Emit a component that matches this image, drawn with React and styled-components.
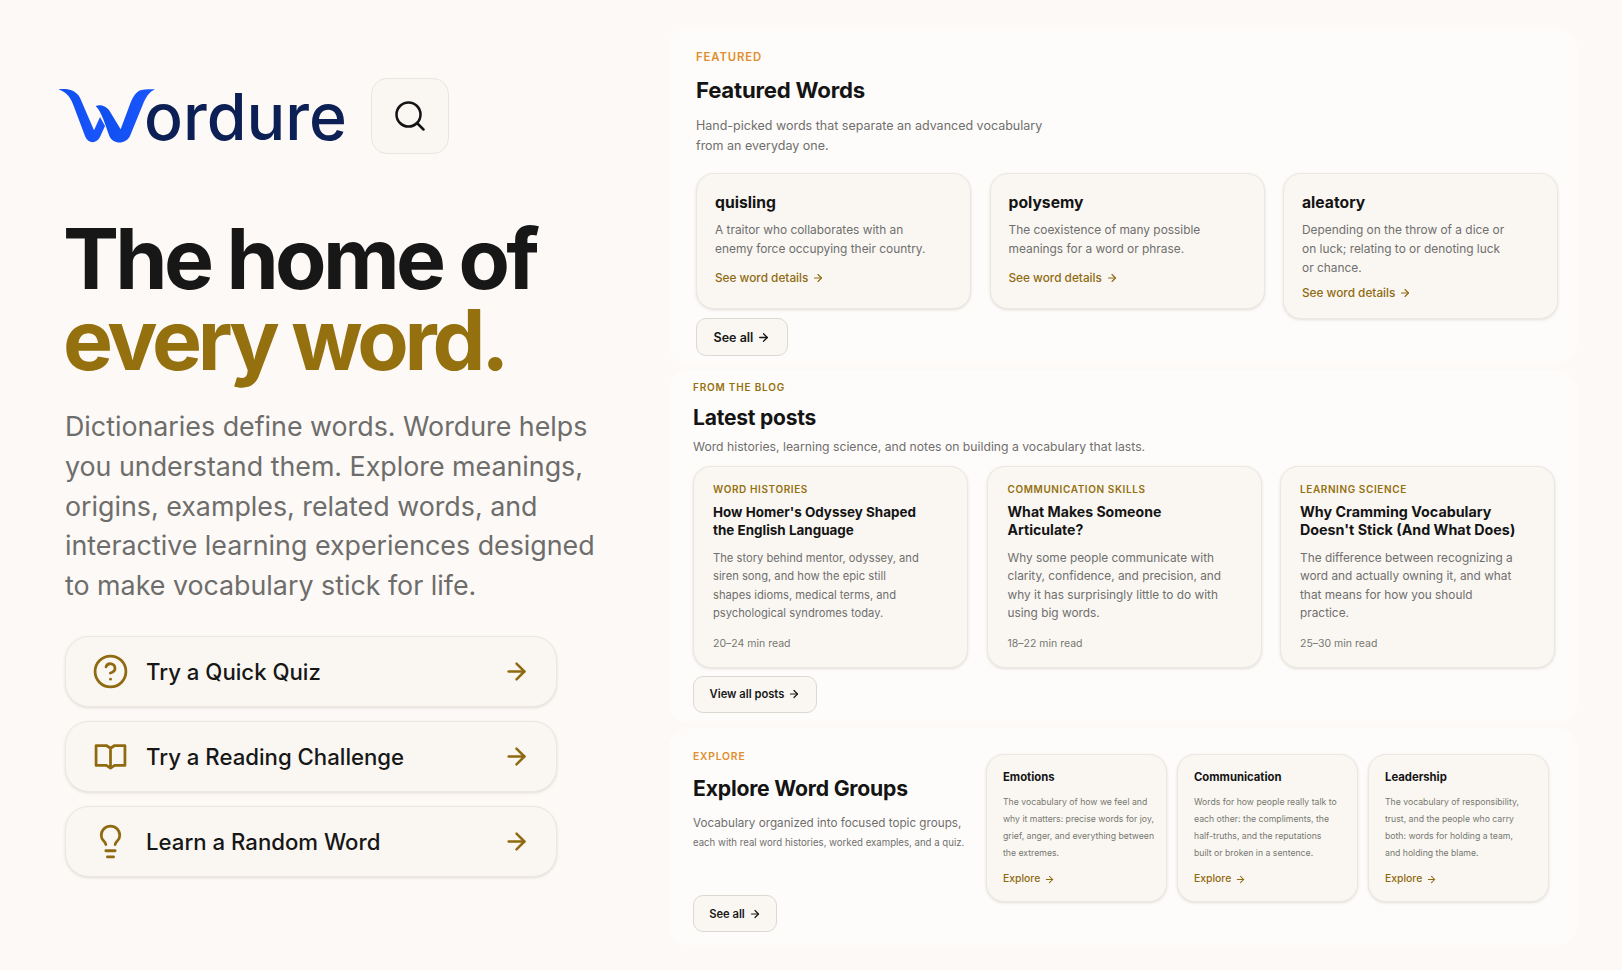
import React from 'react';
import styled, { createGlobalStyle } from 'styled-components';
import { CircleHelp, Lightbulb, ArrowRight, Search } from 'lucide-react';

const GlobalStyle = createGlobalStyle`
  html, body {
    margin: 0;
    padding: 0;
    background: #fdf9f6;
    font-family: 'Inter', 'Liberation Sans', sans-serif;
    color: #141414;
  }
  * { box-sizing: border-box; }
`;

const Page = styled.div`
  width: 1622px;
  height: 970px;
  overflow: hidden;
  display: grid;
  grid-template-columns: 669px 908px;
  background: #fdf9f6;
`;

const Hero = styled.div`
  display: flex;
  flex-direction: column;
  padding: 78px 0 0 65px;
`;

const LogoRow = styled.div`
  display: flex;
  align-items: center;
  gap: 24px;
  margin-left: -7px;
`;

const Logo = styled.div`
  display: flex;
  align-items: flex-end;
  height: 76px;
  padding-bottom: 3px;
`;

const LogoMark = styled.svg`
  width: 110px;
  height: 70px;
  margin: 0 -16px 0 -8px;
  flex: none;
`;

const LogoWord = styled.span`
  font-size: 64.5px;
  font-weight: 500;
  line-height: 64px;
  color: #0d2055;
  padding-bottom: 2px;
`;

const SearchButton = styled.button`
  width: 78px;
  height: 76px;
  display: flex;
  align-items: center;
  justify-content: center;
  background: #faf7f3;
  border: 1px solid #e9e5df;
  border-radius: 16px;
  color: #141414;
  padding: 0;
`;

const Headline = styled.h1`
  margin: 64px 0 0 -2px;
  font-size: 84px;
  line-height: 81px;
  font-weight: 700;
  letter-spacing: -0.044em;
  color: #171717;
`;

const Gold = styled.span`
  display: block;
  letter-spacing: -0.05em;
  color: #94700f;
`;

const Lead = styled.p`
  margin: 27px 0 0;
  width: 540px;
  font-size: 26.8px;
  line-height: 39.8px;
  font-weight: 400;
  color: #6d6d6b;
`;

const Actions = styled.div`
  display: flex;
  flex-direction: column;
  gap: 14px;
  margin-top: 30px;
  width: 492px;
`;

const Action = styled.a`
  height: 71px;
  display: flex;
  align-items: center;
  padding: 0 26px 0 28px;
  background: #faf7f3;
  border: 1px solid #ebe7e1;
  border-radius: 24px;
  box-shadow: 0 1px 3px rgba(60, 50, 30, 0.14);
  color: #8f6a10;
`;

const ActionIcon = styled.span`
  width: 32px;
  display: flex;
  justify-content: center;
  flex: none;

  svg {
    flex: none;
  }
`;

const ActionLabel = styled.span`
  flex: 1;
  margin-left: 20px;
  font-size: 22.2px;
  font-weight: 500;
  color: #171717;
`;

const Panels = styled.div`
  display: flex;
  flex-direction: column;
  gap: 5px;
  padding-top: 27px;
`;

const Panel = styled.section`
  height: ${(p) => p.$height}px;
  padding: ${(p) => p.$top}px 0 0 ${(p) => p.$left}px;
  background: #fefcfa;
  border-radius: 20px;
`;

const Eyebrow = styled.div`
  font-size: ${(p) => p.$size}px;
  line-height: 14px;
  font-weight: 600;
  letter-spacing: 0.08em;
  color: ${(p) => p.$color};
`;

const PanelTitle = styled.h2`
  margin: ${(p) => p.$gap}px 0 0;
  font-size: ${(p) => p.$size}px;
  line-height: 30px;
  font-weight: 650;
  letter-spacing: -0.01em;
  color: #141414;
`;

const PanelText = styled.p`
  margin: ${(p) => p.$gap}px 0 0;
  font-size: ${(p) => p.$size || 12.5}px;
  line-height: 20.5px;
  color: #6f6f6d;
`;

const CardRow = styled.div`
  display: grid;
  grid-template-columns: repeat(3, 275px);
  column-gap: 18.5px;
  align-items: start;
  margin-top: ${(p) => p.$gap}px;
`;

const Card = styled.article`
  padding: ${(p) => p.$pad};
  min-height: ${(p) => p.$min || 0}px;
  background: #faf7f3;
  border: 1px solid #ebe7e1;
  border-radius: 18px;
  box-shadow: 0 1px 3px rgba(60, 50, 30, 0.14);
`;

const WordName = styled.h3`
  margin: 0;
  font-size: 15.7px;
  line-height: 22px;
  font-weight: 650;
  color: #141414;
`;

const WordDef = styled.p`
  margin: 6px 0 0;
  font-size: 11.9px;
  line-height: 19px;
  color: #6f6f6d;
`;

const TextLink = styled.a`
  display: flex;
  align-items: center;
  gap: 4px;
  margin-top: ${(p) => p.$gap}px;
  font-size: ${(p) => p.$size}px;
  line-height: 16px;
  font-weight: 500;
  color: #8f6a10;
`;

const OutlineButton = styled.a`
  display: inline-flex;
  align-items: center;
  justify-content: center;
  gap: 4px;
  width: ${(p) => p.$width}px;
  height: ${(p) => p.$h || 37}px;
  margin-top: ${(p) => p.$gap}px;
  background: #faf7f3;
  border: 1px solid #dcd8d2;
  border-radius: 10px;
  font-size: ${(p) => p.$size}px;
  font-weight: 600;
  color: #171717;
`;

const PostTag = styled.div`
  font-size: 10px;
  line-height: 14px;
  font-weight: 600;
  letter-spacing: 0.06em;
  color: #94700f;
`;

const PostTitle = styled.h3`
  margin: 7px 0 0;
  font-size: ${(p) => p.$size}px;
  line-height: 18.8px;
  font-weight: 650;
  color: #141414;
`;

const PostBody = styled.p`
  margin: 9px 0 0;
  font-size: ${(p) => p.$size}px;
  line-height: 18.3px;
  color: #6f6f6d;
`;

const PostMeta = styled.div`
  margin-top: 14px;
  font-size: 10.5px;
  line-height: 16px;
  color: #77776f;
`;

const ExploreLayout = styled.div`
  display: flex;
  gap: 21px;
`;

const ExploreIntro = styled.div`
  width: 272px;
  height: 183px;
  display: flex;
  flex-direction: column;
  align-items: flex-start;
  flex: none;
`;

const ExploreLine = styled.span`
  display: block;
  white-space: nowrap;
  font-size: ${(p) => p.$size}px;
  line-height: 20px;
`;

const ExploreButton = styled(OutlineButton)`
  margin-top: auto;
`;

const GroupRow = styled.div`
  display: grid;
  grid-template-columns: repeat(3, 181px);
  column-gap: 10px;
  margin-top: 5px;
  height: 148px;
`;

const GroupName = styled.h3`
  margin: 0;
  font-size: 11.3px;
  line-height: 16px;
  font-weight: 650;
  color: #141414;
`;

const GroupText = styled.p`
  margin: 9px 0 0;
  font-size: 8.7px;
  line-height: 17px;
  color: #77776f;
  white-space: nowrap;
`;

const BookIcon = () => (
  <svg width="33" height="33" viewBox="0 0 24 24" fill="none" stroke="currentColor" strokeWidth="2" strokeLinejoin="round" strokeLinecap="round">
    <path d="M12 6v13.5M1.5 4h7.5l3 2 3-2h7.5v14.5h-7.5l-3 2-3-2H1.5z" />
  </svg>
);

const WMark = () => (
  <LogoMark viewBox="0 0 330 210">
    <defs>
      <linearGradient id="wGrad" x1="0" y1="0" x2="1" y2="0">
        <stop offset="0" stopColor="#0f4fec" />
        <stop offset="1" stopColor="#1a55ff" />
      </linearGradient>
    </defs>
    <path fill="url(#wGrad)" d="M25 25C50 22 75 24 90 50L132 148L150 108L165 135L150 168C140 188 115 190 105 165L70 72C60 45 45 32 25 25Z" />
    <path fill="url(#wGrad)" d="M137 75C150 70 170 72 182 95L212 145L238 75C248 48 258 30 275 27C288 25 300 25 315 25C297 33 287 50 278 72L240 165C228 190 190 192 178 165L160 115C152 95 145 82 137 75Z" />
  </LogoMark>
);

const actions = [
  { label: 'Try a Quick Quiz', icon: <CircleHelp size={37} strokeWidth={1.8} /> },
  { label: 'Try a Reading Challenge', icon: <BookIcon /> },
  { label: 'Learn a Random Word', icon: <Lightbulb size={37} strokeWidth={1.8} /> },
];

const words = [
  { name: 'quisling', def: ['A traitor who collaborates with an', 'enemy force occupying their country.'], min: 136 },
  { name: 'polysemy', def: ['The coexistence of many possible', 'meanings for a word or phrase.'], min: 136 },
  { name: 'aleatory', def: ['Depending on the throw of a dice or', 'on luck; relating to or denoting luck', 'or chance.'], min: 146 },
];

const posts = [
  {
    tag: 'WORD HISTORIES',
    title: ["How Homer's Odyssey Shaped", 'the English Language'],
    body: ['The story behind mentor, odyssey, and', 'siren song, and how the epic still', 'shapes idioms, medical terms, and', 'psychological syndromes today.'],
    meta: '20–24 min read',
    pad: '15px 19px 0',
    titleSize: 13.45,
    bodySize: 11.2,
  },
  {
    tag: 'COMMUNICATION SKILLS',
    title: ['What Makes Someone', 'Articulate?'],
    body: ['Why some people communicate with', 'clarity, confidence, and precision, and', 'why it has surprisingly little to do with', 'using big words.'],
    meta: '18–22 min read',
    pad: '15px 19px 0 20px',
    titleSize: 14.1,
    bodySize: 11.85,
  },
  {
    tag: 'LEARNING SCIENCE',
    title: ['Why Cramming Vocabulary', "Doesn't Stick (And What Does)"],
    body: ['The difference between recognizing a', 'word and actually owning it, and what', 'that means for how you should', 'practice.'],
    meta: '25–30 min read',
    pad: '15px 19px 0',
    titleSize: 14.3,
    bodySize: 11.85,
  },
];

const groups = [
  { name: 'Emotions', text: ['The vocabulary of how we feel and', 'why it matters: precise words for joy,', 'grief, anger, and everything between', 'the extremes.'] },
  { name: 'Communication', text: ['Words for how people really talk to', 'each other: the compliments, the', 'half-truths, and the reputations', 'built or broken in a sentence.'] },
  { name: 'Leadership', text: ['The vocabulary of responsibility,', 'trust, and the people who carry', 'both: words for holding a team,', 'and holding the blame.'] },
];

const Lines = ({ items }) => items.map((line) => <div key={line}>{line}</div>);

export default function App() {
  return (
    <Page>
      <GlobalStyle />
      <Hero>
        <LogoRow>
          <Logo>
            <WMark />
            <LogoWord>ordure</LogoWord>
          </Logo>
          <SearchButton aria-label="Search">
            <Search size={36} strokeWidth={1.7} />
          </SearchButton>
        </LogoRow>
        <Headline>
          The home of
          <Gold>every word.</Gold>
        </Headline>
        <Lead>
          Dictionaries define words. Wordure helps you understand them. Explore meanings, origins, examples, related words, and
          interactive learning experiences designed to make vocabulary stick for life.
        </Lead>
        <Actions>
          {actions.map((a) => (
            <Action key={a.label}>
              <ActionIcon>{a.icon}</ActionIcon>
              <ActionLabel>{a.label}</ActionLabel>
              <ArrowRight size={27} strokeWidth={2.2} />
            </Action>
          ))}
        </Actions>
      </Hero>

      <Panels>
        <Panel $height={338} $top={23} $left={27}>
          <Eyebrow $color="#e08e2e" $size={11.3}>FEATURED</Eyebrow>
          <PanelTitle $gap={11} $size={22.2}>Featured Words</PanelTitle>
          <PanelText $gap={10.5}>
            Hand-picked words that separate an advanced vocabulary
            <br />
            from an everyday one.
          </PanelText>
          <CardRow $gap={16.5}>
            {words.map((w) => (
              <Card key={w.name} $pad="18px 18px 0" $min={w.min}>
                <WordName>{w.name}</WordName>
                <WordDef><Lines items={w.def} /></WordDef>
                <TextLink $gap={w.def.length === 3 ? 8 : 11.5} $size={11.8}>
                  See word details <ArrowRight size={12} strokeWidth={2.2} />
                </TextLink>
              </Card>
            ))}
          </CardRow>
          <OutlineButton $gap={-1} $h={38} $width={92} $size={12.5}>
            See all <ArrowRight size={13} strokeWidth={2.4} />
          </OutlineButton>
        </Panel>

        <Panel $height={353} $top={10} $left={24}>
          <Eyebrow $color="#94700f" $size={10}>FROM THE BLOG</Eyebrow>
          <PanelTitle $gap={9} $size={21}>Latest posts</PanelTitle>
          <PanelText $gap={4} $size={12.2}>Word histories, learning science, and notes on building a vocabulary that lasts.</PanelText>
          <CardRow $gap={8}>
            {posts.map((p) => (
              <Card key={p.tag} $pad={p.pad} $min={202}>
                <PostTag>{p.tag}</PostTag>
                <PostTitle $size={p.titleSize}><Lines items={p.title} /></PostTitle>
                <PostBody $size={p.bodySize}><Lines items={p.body} /></PostBody>
                <PostMeta>{p.meta}</PostMeta>
              </Card>
            ))}
          </CardRow>
          <OutlineButton $gap={8} $width={124} $size={11.2}>
            View all posts <ArrowRight size={12} strokeWidth={2.4} />
          </OutlineButton>
        </Panel>

        <Panel $height={217} $top={21} $left={24}>
          <ExploreLayout>
            <ExploreIntro>
              <Eyebrow $color="#e08e2e" $size={10.3}>EXPLORE</Eyebrow>
              <PanelTitle $gap={10} $size={21.2}>Explore Word Groups</PanelTitle>
              <PanelText $gap={10}>
                <ExploreLine $size={11.7}>Vocabulary organized into focused topic groups,</ExploreLine>
                <ExploreLine $size={9.65}>each with real word histories, worked examples, and a quiz.</ExploreLine>
              </PanelText>
              <ExploreButton $width={84} $size={11.2}>
                See all <ArrowRight size={12} strokeWidth={2.4} />
              </ExploreButton>
            </ExploreIntro>
            <GroupRow>
              {groups.map((g) => (
                <Card key={g.name} $pad="14px 16px 0 16px">
                  <GroupName>{g.name}</GroupName>
                  <GroupText><Lines items={g.text} /></GroupText>
                  <TextLink $gap={9} $size={10.4}>
                    Explore <ArrowRight size={11} strokeWidth={2.2} />
                  </TextLink>
                </Card>
              ))}
            </GroupRow>
          </ExploreLayout>
        </Panel>
      </Panels>
    </Page>
  );
}
